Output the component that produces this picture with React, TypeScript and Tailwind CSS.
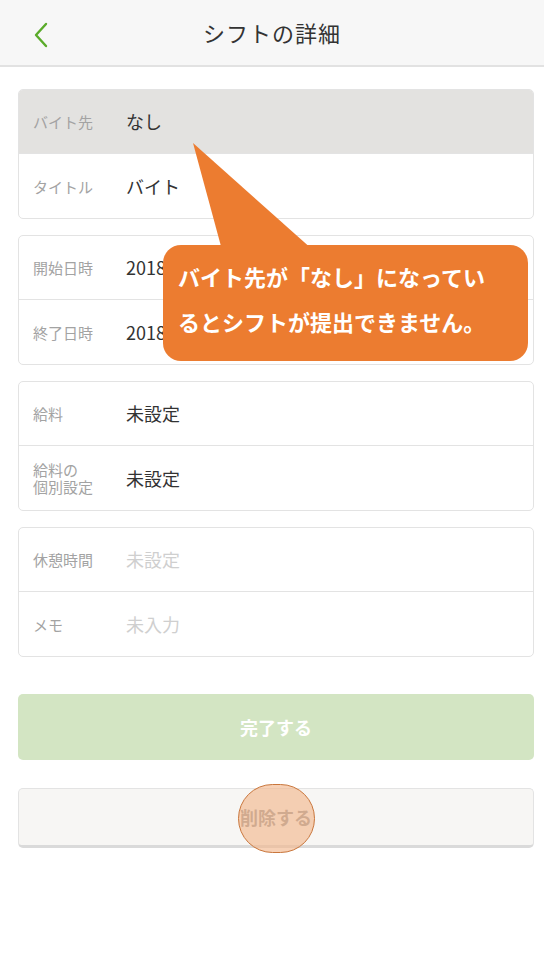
import React from "react";

const font = { fontFamily: '"Noto Sans CJK JP", "Noto Sans", sans-serif' };

function Row({ label, value, muted, bg, last }: { label: React.ReactNode; value: string; muted?: boolean; bg?: string; last?: boolean }) {
  return (
    <div className={`flex h-[64px] items-center ${bg ?? ""} ${last ? "" : "border-b-[1.5px] border-[#e3e3e3]"}`}>
      <div className="w-[107px] shrink-0 pl-[14px] text-[15px] leading-[17px] text-[#a3a3a3]">{label}</div>
      <div className={`text-[18px] ${muted ? "text-[#cfcfcf]" : "text-[#333333]"}`}>{value}</div>
    </div>
  );
}

function Card({ children }: { children: React.ReactNode }) {
  return <div className="overflow-hidden rounded-[5px] border-[1.5px] border-[#e3e3e3] bg-white">{children}</div>;
}

export default function App() {
  return (
    <div className="relative h-[960px] w-[544px] overflow-hidden bg-white" style={font}>
      <header className="relative flex h-[67px] items-center justify-center border-b-2 border-[#e2e2e2] bg-[#f7f7f7]">
        <svg className="absolute left-[33px] top-[22px]" width="16" height="26" viewBox="0 0 16 26">
          <path d="M13 2 L3 13 L13 24" fill="none" stroke="#5aab2a" strokeWidth="2.4" strokeLinecap="round" strokeLinejoin="round" />
        </svg>
        <h1 className="text-[22px] font-normal tracking-[1px] text-[#333333]">シフトの詳細</h1>
      </header>

      <main className="flex flex-col pl-[18px] pr-[10px] pt-[22px]">
        <div className="flex flex-col gap-[16px]">
          <Card>
            <Row label="バイト先" value="なし" bg="bg-[#e3e2e0]" />
            <Row label="タイトル" value="バイト" last />
          </Card>
          <Card>
            <Row label="開始日時" value="2018/05/20(日) 10:00" />
            <Row label="終了日時" value="2018/05/20(日) 18:00" last />
          </Card>
          <Card>
            <Row label="給料" value="未設定" />
            <Row label={<>給料の<br />個別設定</>} value="未設定" last />
          </Card>
          <Card>
            <Row label="休憩時間" value="未設定" muted />
            <Row label="メモ" value="未入力" muted last />
          </Card>
        </div>

        <button className="mt-[37px] flex h-[66px] items-center justify-center rounded-[5px] bg-[#d3e5c3] text-[18px] font-bold text-white">
          完了する
        </button>
        <button className="mt-[28px] flex h-[60px] items-center justify-center rounded-[5px] border-[1.5px] border-b-[3px] border-[#e3e3e3] border-b-[#dadada] bg-[#f7f6f4] text-[18px] font-bold text-[#8f8f8f]">
          削除する
        </button>
      </main>

      {/* callout */}
      <svg className="pointer-events-none absolute left-0 top-0" width="544" height="960">
        <polygon points="193,143 222,250 313,250" fill="#ec7c30" />
      </svg>
      <div className="absolute left-[163px] top-[245px] h-[116px] w-[365px] rounded-[18px] bg-[#ec7c30] pl-[15px] pt-[9px] text-[22px] font-bold leading-[45px] text-white">
        バイト先が「なし」になってい<br />るとシフトが提出できません。
      </div>

      {/* tap indicator */}
      <div className="absolute left-[238px] top-[784px] h-[69px] w-[77px] rounded-full border-[1.5px] border-[#c9763c] bg-[#f3b98f]/65" />
    </div>
  );
}
